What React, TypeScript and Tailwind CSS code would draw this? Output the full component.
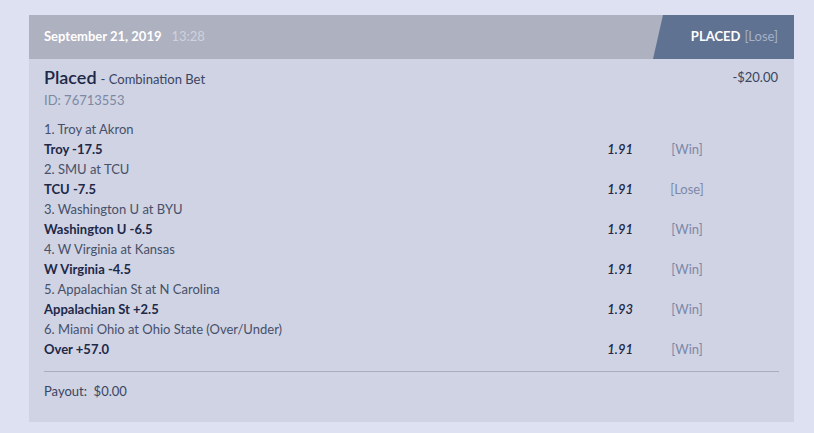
const legs = [
  { game: '1. Troy at Akron', pick: 'Troy -17.5', odds: '1.91', result: 'Win' },
  { game: '2. SMU at TCU', pick: 'TCU -7.5', odds: '1.91', result: 'Lose' },
  { game: '3. Washington U at BYU', pick: 'Washington U -6.5', odds: '1.91', result: 'Win' },
  { game: '4. W Virginia at Kansas', pick: 'W Virginia -4.5', odds: '1.91', result: 'Win' },
  { game: '5. Appalachian St at N Carolina', pick: 'Appalachian St +2.5', odds: '1.93', result: 'Win' },
  { game: '6. Miami Ohio at Ohio State (Over/Under)', pick: 'Over +57.0', odds: '1.91', result: 'Win' },
];

export default function App() {
  return (
    <div className="min-h-screen bg-[#dee1f1] pt-[15px] font-['Lato','Liberation_Sans',sans-serif]">
      <div className="ml-[29px] w-[765px]">
        <div className="flex h-[44px] items-stretch justify-between bg-[#aeb1c0]">
          <div className="flex items-center pl-[15px] text-[13px]">
            <span className="font-bold text-white">September 21, 2019</span>
            <span className="ml-[10px] text-[#cfd2de]">13:28</span>
          </div>
          <div className="flex w-[141px] items-center justify-end bg-[#5f7291] pr-[16px] text-[13px] [clip-path:polygon(10px_0,100%_0,100%_100%,0_100%)]">
            <span className="font-bold text-white">PLACED</span>
            <span className="ml-[4px] text-[#a6b1c7]">[Lose]</span>
          </div>
        </div>

        <div className="bg-[#cfd3e3] px-[15px] pt-[6px] pb-[21px]">
          <div className="flex justify-between">
            <div className="leading-[24px]">
              <span className="text-[18px] font-semibold text-[#1e2848]">Placed</span>
              <span className="ml-[4px] text-[13px] text-[#3a4562]">- Combination Bet</span>
            </div>
            <div className="pt-[2px] pr-[1px] text-[13px] leading-[20px] text-[#3a4562]">-$20.00</div>
          </div>
          <div className="text-[13px] leading-[18px] text-[#7d88a3]">ID: 76713553</div>

          <div className="mt-[10px]">
            {legs.map((leg) => (
              <div key={leg.game} className="text-[13px] leading-[20px]">
                <div className="text-[#475069]">{leg.game}</div>
                <div className="flex">
                  <div className="flex-1 font-bold text-[#1e2848]">{leg.pick}</div>
                  <div className="w-[60px] text-right font-semibold italic text-[#1e2848]">{leg.odds}</div>
                  <div className="ml-[18px] w-[72px] text-center text-[#7d88a8]">[{leg.result}]</div>
                  <div className="w-[56px]" />
                </div>
              </div>
            ))}
          </div>

          <div className="mt-[12px] border-t border-[#a9adbd] pt-[9px] text-[13px] leading-[20px] text-[#3a4562]">
            Payout:&nbsp; $0.00
          </div>
        </div>

        <div className="mt-[11px] flex h-[2px]">
          <div className="flex-1 bg-[#aeb1c0]" />
          <div className="w-[130px] bg-[#5f7291]" />
        </div>
      </div>
    </div>
  );
}
